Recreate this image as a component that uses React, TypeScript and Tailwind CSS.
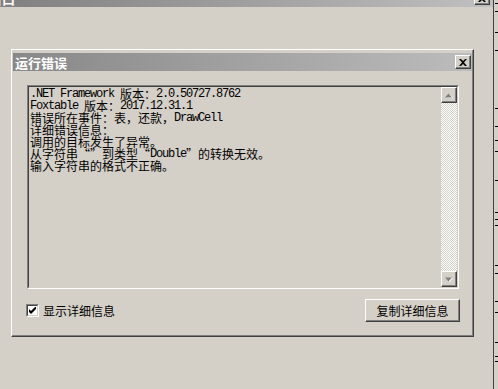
import React from "react";

const CJK = "font-['Noto_Sans_CJK_SC',sans-serif]";

// ASCII runs in a narrow mono face, the rest in the CJK face
const Mixed = ({ text }: { text: string }) => (
  <>
    {text
      .split(/([\x20-\x7e]+)/)
      .filter(Boolean)
      .map((s, i) =>
        /^[\x20-\x7e]+$/.test(s) ? (
          <span key={i} className="inline-block h-[12px] font-['Liberation_Mono',monospace] text-[12px] leading-[12px] tracking-[-1.2px]">
            {s}
          </span>
        ) : (
          <span key={i} className="inline-block h-[12px] text-[12px] leading-[12px] [font-feature-settings:'fwid']">
            {s}
          </span>
        )
      )}
  </>
);

const lines = [
  ".NET Framework 版本：2.0.50727.8762",
  "Foxtable 版本：2017.12.31.1",
  "错误所在事件：表，还款，DrawCell",
  "详细错误信息：",
  "调用的目标发生了异常。",
  "从字符串“”到类型“Double”的转换无效。",
  "输入字符串的格式不正确。",
];

const ticks = [3, 11, 32, 50, 108, 126, 140, 151, 180, 212, 219, 225, 265, 273, 301, 312, 342, 356, 361];

const CloseBtn = () => (
  <div className="flex h-[14px] w-[16px] items-center justify-center border-t border-l border-t-white border-l-white border-r border-b border-r-[#404040] border-b-[#404040] bg-[#d4d0c8] shadow-[inset_-1px_-1px_#808080]">
    <svg width="8" height="7" viewBox="0 0 8 7">
      <path d="M0 0h2l2 2 2-2h2L5 3.5 8 7H6L4 5 2 7H0l3-3.5z" fill="#000" />
    </svg>
  </div>
);

const ScrollBtn = ({ up }: { up?: boolean }) => (
  <div className="flex h-[16px] w-[16px] items-center justify-center border-t border-l border-t-white border-l-white border-r border-b border-r-[#404040] border-b-[#404040] bg-[#d4d0c8] shadow-[inset_-1px_-1px_#808080]">
    <svg width="8" height="5" viewBox="0 0 8 5">
      {up ? (
        <>
          <path d="M1 5L4 1.5 7 5z" fill="#fff" transform="translate(1 0)" />
          <path d="M0 4.5L3.5 0.5 7 4.5z" fill="#808080" />
        </>
      ) : (
        <>
          <path d="M1 0.5h7L4.5 4.5z" fill="#fff" transform="translate(0 0.5)" />
          <path d="M0 0.5h7L3.5 4.5z" fill="#808080" />
        </>
      )}
    </svg>
  </div>
);

export default function App() {
  return (
    <div lang="zh-CN" className={`flex h-[389px] w-[498px] overflow-hidden bg-[#d4d0c8] ${CJK}`}>
      <div className="flex w-[493px] flex-col">
        {/* outer window title bar, mostly off screen */}
        <div className="h-[7px] overflow-hidden">
          <div className="mt-[-11px] flex h-[18px] items-center justify-between bg-gradient-to-r from-[#808080] to-[#c0c0c0] pr-[3px]">
            <span className="ml-[-11px] text-[13px] font-bold leading-none text-white">窗口</span>
            <CloseBtn />
          </div>
        </div>

        <div className="pt-[42px] pl-[11px]">
          {/* dialog */}
          <div className="flex h-[288px] w-[463px] flex-col border-t border-l border-t-white border-l-white border-r border-b border-r-[#404040] border-b-[#404040] p-px shadow-[inset_-1px_-1px_#808080]">
            <div className="mt-[2px] flex h-[18px] items-center justify-between bg-gradient-to-r from-[#888888] to-[#bcbcbc] pr-[1px] pl-[2px]">
              <span className="text-[13px] font-bold leading-none text-white">运行错误</span>
              <CloseBtn />
            </div>

            <div className="flex flex-col pt-[14px] pl-[14px]">
              {/* read-only text box */}
              <div className="flex h-[204px] w-[432px] border-t border-l border-t-[#808080] border-l-[#808080] border-r border-b border-r-white border-b-white">
                <div className="flex flex-1 border-t border-l border-t-[#404040] border-l-[#404040] border-r border-b border-r-[#d4d0c8] border-b-[#d4d0c8]">
                  <div className="flex-1 pt-[1px] pl-[1px] text-black">
                    {lines.map((l, i) => (
                      <div key={i} className="flex h-[12px] items-center whitespace-pre">
                        <Mixed text={l} />
                      </div>
                    ))}
                  </div>
                  <div className="flex w-[16px] flex-col">
                    <ScrollBtn up />
                    <div className="flex-1 bg-[repeating-conic-gradient(#ffffff_0_25%,#d4d0c8_0_50%)] bg-[length:2px_2px]" />
                    <ScrollBtn />
                  </div>
                </div>
              </div>

              <div className="mt-[10px] flex h-[23px] w-[433px] items-center justify-between">
                <div className="ml-[-1px] flex items-center gap-[4px]">
                  <div className="flex h-[13px] w-[13px] items-center justify-center border-t border-l border-t-[#808080] border-l-[#808080] border-r border-b border-r-white border-b-white">
                    <div className="flex h-[11px] w-[11px] items-center justify-center border-t border-l border-t-[#404040] border-l-[#404040] border-r border-b border-r-[#d4d0c8] border-b-[#d4d0c8] bg-white">
                      <svg width="7" height="7" viewBox="0 0 7 7">
                        <path d="M0 2v3l2 2 5-5V-1L2 4z" fill="#000" />
                      </svg>
                    </div>
                  </div>
                  <span className="text-[12px] leading-none text-black">显示详细信息</span>
                </div>
                <div className="flex h-[23px] w-[95px] items-center justify-center border-t border-l border-t-white border-l-white border-r border-b border-r-[#404040] border-b-[#404040] bg-[#d4d0c8] shadow-[inset_-1px_-1px_#808080] text-[12px] leading-none text-black">
                  复制详细信息
                </div>
              </div>
            </div>
          </div>
        </div>
      </div>

      <div className="w-px bg-[#404040]" />
      <svg width="4" height="389" className="block">
        {ticks.map((y) => (
          <rect key={y} x="1" y={y} width="3" height="1" fill="#000" />
        ))}
      </svg>
    </div>
  );
}
